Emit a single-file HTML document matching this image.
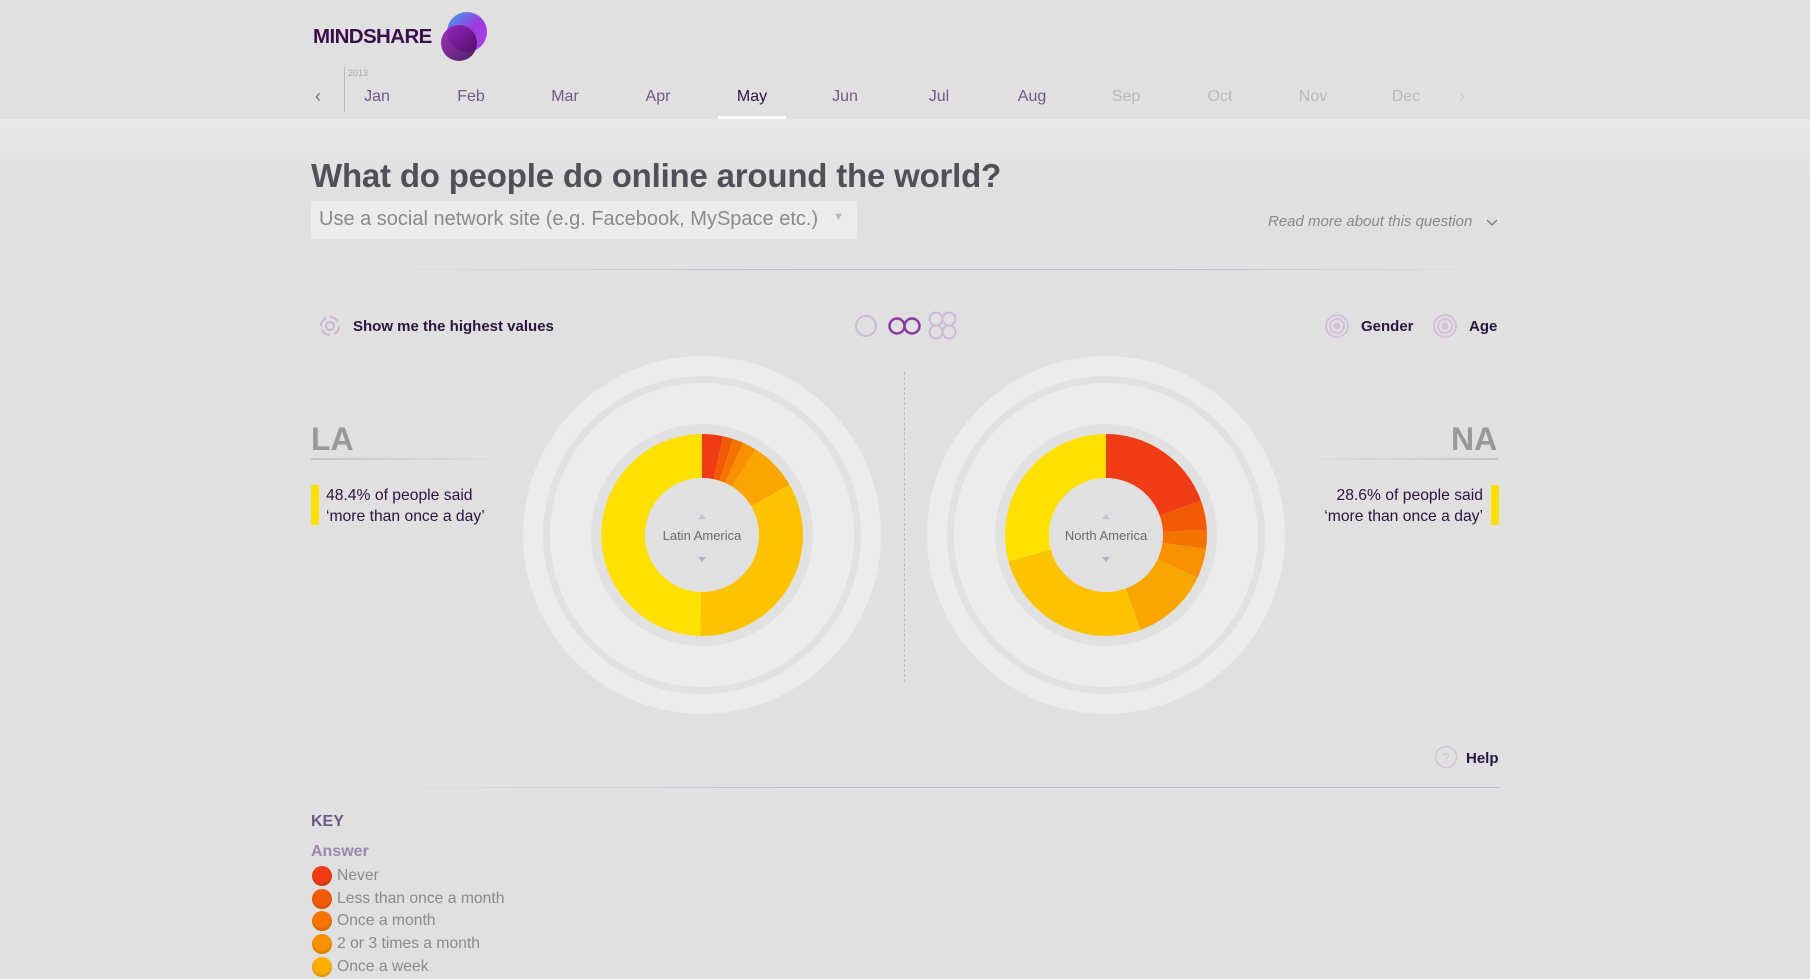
<!DOCTYPE html>
<html><head><meta charset="utf-8"><style>
*{margin:0;padding:0;box-sizing:border-box}
body{width:1810px;height:979px;background:#e0e0e0;font-family:"Liberation Sans",Arial,sans-serif;position:relative;overflow:hidden}
.a{position:absolute;white-space:nowrap}
.m{position:absolute;top:88px;font-size:16px;color:#6e5a84;transform:translateX(-50%)}
.li{position:absolute;left:312px;font-size:15.7px;color:#8a8a8a;padding-left:25px;line-height:20px}
.li i{position:absolute;left:0;top:0;width:20px;height:20px;border-radius:50%;box-shadow:inset 0 -2px 2px rgba(0,0,0,.15)}
</style></head><body>
<div class="a" style="left:0;top:119px;width:1810px;height:60px;background:linear-gradient(#e9e9e9,#e0e0e0)"></div>
<div class="a" style="left:313px;top:25px;font-size:20.5px;font-weight:bold;color:#3a0e4a;letter-spacing:-0.6px">MINDSHARE</div>
<svg class="a" style="left:434px;top:8px" width="60" height="56"><defs><linearGradient id="g1" x1="0" y1="0" x2="1" y2="1"><stop offset="0" stop-color="#38a8f0"/><stop offset=".5" stop-color="#9b3ce0"/><stop offset="1" stop-color="#b040e0"/></linearGradient><linearGradient id="g2" x1="0" y1="0" x2="1" y2="1"><stop offset="0" stop-color="#a020c0"/><stop offset="1" stop-color="#3a0a50"/></linearGradient></defs><circle cx="33" cy="24" r="20" fill="url(#g1)"/><circle cx="25" cy="35" r="18" fill="url(#g2)" opacity=".9"/></svg>
<div class="a" style="left:344px;top:67px;width:1px;height:45px;background:#bbb"></div>
<div class="a" style="left:348px;top:68px;font-size:9px;color:#aaa">2013</div>
<div class="a" style="left:315px;top:86px;font-size:18px;color:#777">&#8249;</div>
<div class="a" style="left:1459px;top:86px;font-size:18px;color:#ccc">&#8250;</div>
<div class="m" style="left:377px">Jan</div><div class="m" style="left:471px">Feb</div><div class="m" style="left:565px">Mar</div><div class="m" style="left:658px">Apr</div><div class="m" style="left:752px;color:#2a1440">May</div><div class="m" style="left:845px">Jun</div><div class="m" style="left:939px">Jul</div><div class="m" style="left:1032px">Aug</div><div class="m" style="left:1126px;color:#bbb">Sep</div><div class="m" style="left:1220px;color:#bbb">Oct</div><div class="m" style="left:1313px;color:#bbb">Nov</div><div class="m" style="left:1406px;color:#bbb">Dec</div>
<div class="a" style="left:718px;top:116px;width:68px;height:3px;background:#fff"></div>
<div class="a" style="left:311px;top:157px;font-size:33px;font-weight:bold;color:#505058;letter-spacing:-0.2px">What do people do online around the world?</div>
<div class="a" style="left:311px;top:201px;width:546px;height:38px;background:#ececec"></div>
<div class="a" style="left:319px;top:208px;font-size:20px;color:#8a8a8a">Use a social network site (e.g. Facebook, MySpace etc.)</div>
<div class="a" style="left:833px;top:211px;font-size:11px;color:#c8a8d8">&#9660;</div>
<div class="a" style="left:1268px;top:213px;font-size:15px;font-style:italic;color:#8a8a8a">Read more about this question</div>
<svg class="a" style="left:1485px;top:217px" width="14" height="10"><path d="M2 3l5 5 5-5" stroke="#777" stroke-width="1.3" fill="none"/></svg>
<div class="a" style="left:360px;top:269px;width:1140px;height:1px;background:linear-gradient(90deg,rgba(190,170,210,0),#c4b6d0 40%,#c4b6d0 70%,rgba(190,170,210,0))"></div>
<svg class="a" style="left:318px;top:314px" width="24" height="24"><circle cx="12" cy="12" r="9" fill="none" stroke="#c8b4d4" stroke-width="2" stroke-dasharray="10 4"/><circle cx="12" cy="12" r="4" fill="none" stroke="#c8b4d4" stroke-width="2"/></svg>
<div class="a" style="left:353px;top:318px;font-size:15px;font-weight:bold;color:#2a1440">Show me the highest values</div>
<svg class="a" style="left:852px;top:311px" width="106" height="30"><circle cx="14" cy="15" r="10" fill="none" stroke="#cdb8d8" stroke-width="2"/><circle cx="45" cy="15" r="7.5" fill="none" stroke="#8a3aa0" stroke-width="2.5"/><circle cx="60" cy="15" r="7.5" fill="none" stroke="#8a3aa0" stroke-width="2.5"/><g fill="none" stroke="#cdb8d8" stroke-width="2"><circle cx="84" cy="8" r="6.5"/><circle cx="97" cy="8" r="6.5"/><circle cx="84" cy="21" r="6.5"/><circle cx="97" cy="21" r="6.5"/></g></svg>
<svg class="a" style="left:1324px;top:313px" width="26" height="26"><circle cx="13" cy="13" r="11" fill="none" stroke="#d4c0dc" stroke-width="2"/><circle cx="13" cy="13" r="7" fill="none" stroke="#d4c0dc" stroke-width="2"/><circle cx="13" cy="13" r="3.5" fill="#d4c0dc"/></svg>
<div class="a" style="left:1361px;top:318px;font-size:15px;font-weight:bold;color:#2a1440">Gender</div>
<svg class="a" style="left:1432px;top:313px" width="26" height="26"><circle cx="13" cy="13" r="11" fill="none" stroke="#d4c0dc" stroke-width="2"/><circle cx="13" cy="13" r="7" fill="none" stroke="#d4c0dc" stroke-width="2"/><circle cx="13" cy="13" r="3.5" fill="#d4c0dc"/></svg>
<div class="a" style="left:1469px;top:318px;font-size:15px;font-weight:bold;color:#2a1440">Age</div>
<div class="a" style="left:904px;top:372px;height:310px;border-left:1px dashed #bbb"></div>
<svg class="a" style="left:0;top:0" width="1810" height="979" id="ch"></svg>
<div class="a" style="left:311px;top:421px;font-size:32px;font-weight:bold;color:#999">LA</div>
<div class="a" style="left:311px;top:458px;width:200px;height:2px;background:linear-gradient(90deg,#c4c4c4,rgba(196,196,196,0))"></div>
<div class="a" style="left:311px;top:485px;width:8px;height:40px;background:#ffe000"></div>
<div class="a" style="left:326px;top:485px;font-size:15.7px;line-height:21px;color:#2a1440">48.4% of people said<br>‘more than once a day’</div>
<div class="a" style="left:1451px;top:421px;font-size:32px;font-weight:bold;color:#999">NA</div>
<div class="a" style="left:1298px;top:458px;width:200px;height:2px;background:linear-gradient(270deg,#c4c4c4,rgba(196,196,196,0))"></div>
<div class="a" style="left:1491px;top:485px;width:8px;height:40px;background:#ffe000"></div>
<div class="a" style="right:327px;top:485px;font-size:15.7px;line-height:21px;color:#2a1440;text-align:right">28.6% of people said<br>‘more than once a day’</div>
<svg class="a" style="left:1434px;top:745px" width="24" height="24"><circle cx="12" cy="12" r="10.5" fill="none" stroke="#d0c4d8" stroke-width="1.5"/><text x="12" y="17" text-anchor="middle" font-size="13" fill="#d0c4d8" font-family="Liberation Sans">?</text></svg>
<div class="a" style="left:1466px;top:750px;font-size:15px;font-weight:bold;color:#2a1440">Help</div>
<div class="a" style="left:360px;top:787px;width:1140px;height:1px;background:linear-gradient(90deg,rgba(190,170,210,0),#c8b8d4 40%,#c8b8d4)"></div>
<div class="a" style="left:311px;top:813px;font-size:16px;font-weight:bold;color:#6a5a88">KEY</div>
<div class="a" style="left:311px;top:843px;font-size:16px;font-weight:bold;color:#9a88b0">Answer</div>
<div class="li" style="top:866px"><i style="background:#f03c14"></i>Never</div>
<div class="li" style="top:889px"><i style="background:#f25a06"></i>Less than once a month</div>
<div class="li" style="top:911px"><i style="background:#f57400"></i>Once a month</div>
<div class="li" style="top:934px"><i style="background:#f89000"></i>2 or 3 times a month</div>
<div class="li" style="top:957px"><i style="background:#fbad00"></i>Once a week</div>
<script>
var s=document.getElementById('ch'),h='';
var cols=['#f03c14','#f25a06','#f57400','#f89000','#faa600','#fdc300','#ffe000'];
function pt(cx,cy,r,a){a=(a-90)*Math.PI/180;return (cx+r*Math.cos(a)).toFixed(2)+' '+(cy+r*Math.sin(a)).toFixed(2);}
function chart(cx,cy,b,label){
h+='<circle cx="'+cx+'" cy="'+cy+'" r="179" fill="#ececec"/>';
h+='<circle cx="'+cx+'" cy="'+cy+'" r="155.5" fill="none" stroke="#e1e1e1" stroke-width="7"/>';
h+='<circle cx="'+cx+'" cy="'+cy+'" r="111" fill="#e1e1e1"/>';
var R=101,r=57;
for(var i=0;i<7;i++){var a0=b[i],a1=b[i+1],L=(a1-a0)>180?1:0;
h+='<path d="M'+pt(cx,cy,R,a0)+' A'+R+' '+R+' 0 '+L+' 1 '+pt(cx,cy,R,a1)+' L'+pt(cx,cy,r,a1)+' A'+r+' '+r+' 0 '+L+' 0 '+pt(cx,cy,r,a0)+'Z" fill="'+cols[i]+'"/>';}
h+='<circle cx="'+cx+'" cy="'+cy+'" r="'+r+'" fill="#e0e0e0"/>';
h+='<path d="M'+(cx-4)+' '+(cy-16)+'l4 -5 4 5z" fill="#c4c0cc"/><path d="M'+(cx-4)+' '+(cy+22)+'l4 5 4 -5z" fill="#b8b4c0"/>';
h+='<text x="'+cx+'" y="'+(cy+5)+'" text-anchor="middle" font-size="13" fill="#6a6a6a" font-family="Liberation Sans">'+label+'</text>';}
chart(702,535,[0,12,18,24,32,60,181,360],'Latin America');
chart(1106,535,[0,70,87,98,115,160,255,360],'North America');
s.innerHTML=h;
</script>
</body></html>
